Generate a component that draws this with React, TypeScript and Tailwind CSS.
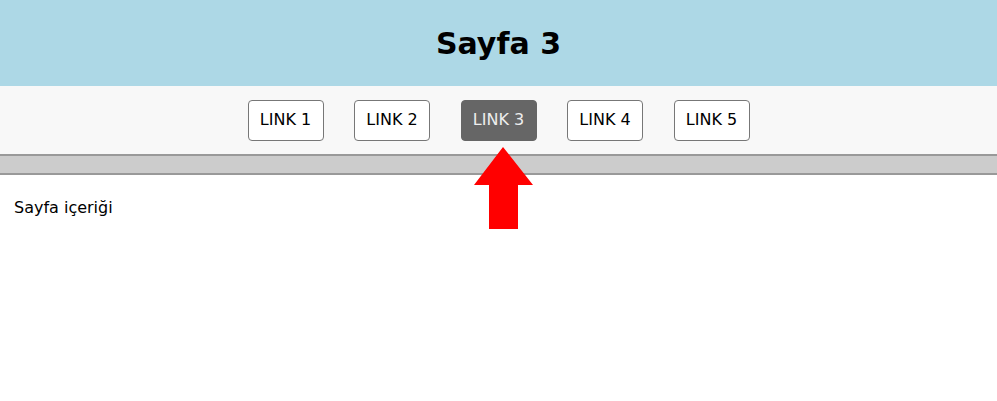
export default function App() {
  const links = ["LINK 1", "LINK 2", "LINK 3", "LINK 4", "LINK 5"];
  const active = 2;

  return (
    <div className="relative min-h-[401px] bg-white font-['DejaVu_Sans',Verdana,sans-serif] text-black">
      <header className="flex h-[86px] items-center justify-center bg-[#add8e6]">
        <h1 className="text-[30px] font-bold">Sayfa 3</h1>
      </header>

      <nav className="flex h-[70px] items-center justify-center gap-[30.5px] border-b-2 border-[#999] bg-[#f8f8f8]">
        {links.map((l, i) => (
          <a
            key={l}
            href="#"
            className={
              i === active
                ? "flex h-[41px] w-[76px] items-center justify-center rounded-[4px] border border-[#666] bg-[#666] text-[16px] text-[#eee]"
                : "flex h-[41px] w-[76px] items-center justify-center rounded-[4px] border border-[#777] bg-white text-[16px] text-black"
            }
          >
            {l}
          </a>
        ))}
      </nav>

      <div className="h-[19px] border-b-2 border-[#999] bg-[#ccc]" />

      <main className="px-[14px] pt-[21px] text-[16px]">Sayfa içeriği</main>

      <svg
        className="absolute left-[474px] top-[147px]"
        width="60"
        height="83"
        viewBox="0 0 60 83"
      >
        <polygon points="29,0 59,38 44,38 44,82 15,82 15,38 0,38" fill="#ff0000" />
      </svg>
    </div>
  );
}
